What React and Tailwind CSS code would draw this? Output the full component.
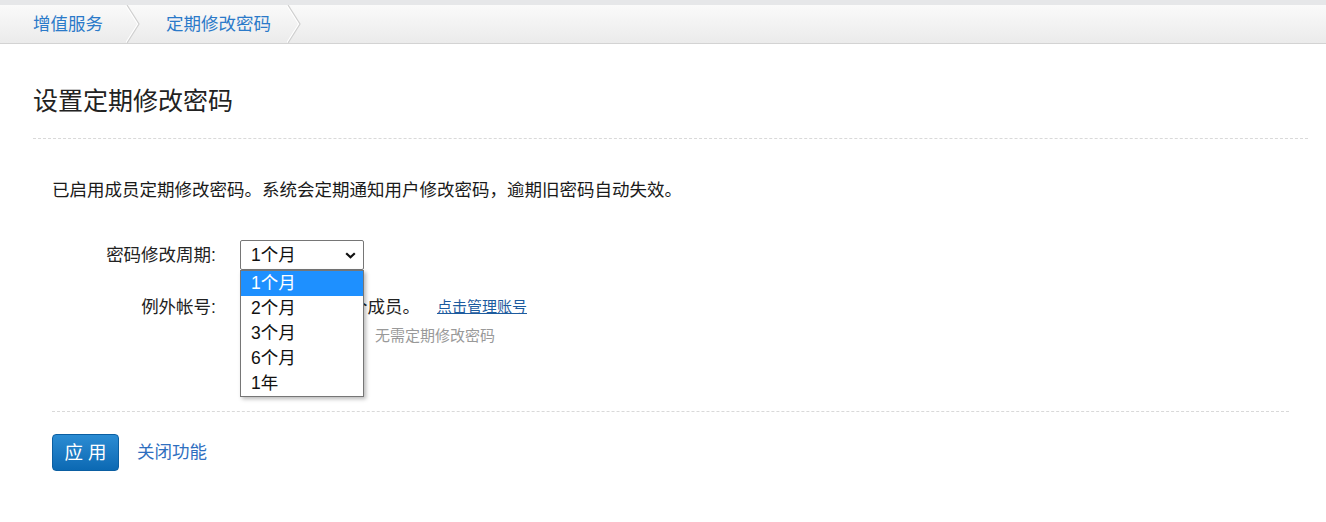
import React from "react";

function Chevron() {
  return (
    <svg width="16" height="38" viewBox="0 0 16 38" className="shrink-0">
      <polyline points="1,0 13,19 1,38" fill="none" stroke="#ffffff" strokeWidth="1.5" transform="translate(-1,0)" />
      <polyline points="1,0 13,19 1,38" fill="none" stroke="#cfcfcf" strokeWidth="1.2" />
    </svg>
  );
}

export default function App() {
  const options = ["1个月", "2个月", "3个月", "6个月", "1年"];
  return (
    <div className="min-h-[522px] bg-white font-['Liberation_Sans','Noto_Sans_CJK_SC',sans-serif] text-[#222]">
      <div className="h-[5px] bg-[#e6e7e9]" />
      <div className="flex h-[39px] items-center border-b border-[#d3d3d3] bg-gradient-to-b from-[#fafafa] to-[#ebebeb]">
        <a className="pl-[33px] pr-[23px] text-[17.5px] leading-[38px] text-[#2b7ac9]">增值服务</a>
        <Chevron />
        <a className="pl-[24px] pr-[16px] text-[17.5px] leading-[38px] text-[#2b7ac9]">定期修改密码</a>
        <Chevron />
      </div>

      <div className="pl-[33px] pr-[18px]">
        <h2 className="border-b border-dashed border-[#d9d9d9] pt-[39px] pb-[19px] text-[25px] leading-[36px] font-normal text-[#222]">
          设置定期修改密码
        </h2>

        <div className="px-[19px]">
          <p className="mt-[38px] text-[17.5px] leading-[26px] text-[#1a1a1a]">
            已启用成员定期修改密码。系统会定期通知用户修改密码，逾期旧密码自动失效。
          </p>

          <div className="mt-[37px]">
            <div className="flex h-[30px] items-center">
              <div className="w-[164px] text-right text-[17.5px] leading-[30px]">密码修改周期:</div>
              <div className="relative ml-[24px] z-10">
                <div className="flex h-[30px] w-[124px] items-center justify-between rounded-[2px] border border-[#767676] bg-white pl-[10px] pr-[7px] text-[17.5px] leading-[28px] text-[#111]">
                  <span>1个月</span>
                  <svg width="11" height="7" viewBox="0 0 11 7">
                    <path d="M1.2 1.2 L5.5 5.3 L9.8 1.2" fill="none" stroke="#111" strokeWidth="2.2" />
                  </svg>
                </div>
                <div className="absolute left-0 top-[30px] w-[124px] border border-[#767676] bg-white shadow-[2px_2px_4px_rgba(0,0,0,0.28)]">
                  {options.map((o, i) => (
                    <div
                      key={o}
                      className={
                        i === 0
                          ? "h-[25px] bg-[#1e90ff] pl-[10px] text-[17.5px] leading-[25px] text-white"
                          : "h-[25px] pl-[10px] text-[17.5px] leading-[25px] text-[#111]"
                      }
                    >
                      {o}
                    </div>
                  ))}
                </div>
              </div>
            </div>

            <div className="mt-[22px] flex h-[30px] items-center">
              <div className="w-[164px] text-right text-[17.5px] leading-[30px]">例外帐号:</div>
              <div className="ml-[27px] flex items-center">
                <span className="text-[17.5px] leading-[30px]">当前已设置 8 个成员。</span>
                <a className="ml-[17px] text-[15px] leading-[30px] text-[#1d5b9e] underline">点击管理账号</a>
              </div>
            </div>

            <div className="mt-[4px] flex">
              <div className="w-[164px]" />
              <div className="ml-[24px] flex text-[15px] leading-[20px] text-[#999]">
                <span>例外帐号内的成员</span>
                <span className="ml-[15px]">无需定期修改密码</span>
              </div>
            </div>
          </div>

          <div className="mt-[65px] border-t border-dashed border-[#d9d9d9] pt-[22px]">
            <div className="flex items-center">
              <button className="h-[37px] w-[67px] rounded-[4px] border border-[#0b5fa2] bg-gradient-to-b from-[#2b8cd3] to-[#0b69b3] text-[18.5px] leading-[35px] text-white">
                应 用
              </button>
              <a className="ml-[18px] text-[17.5px] leading-[37px] text-[#2f6fbf]">关闭功能</a>
            </div>
          </div>
        </div>
      </div>
    </div>
  );
}
